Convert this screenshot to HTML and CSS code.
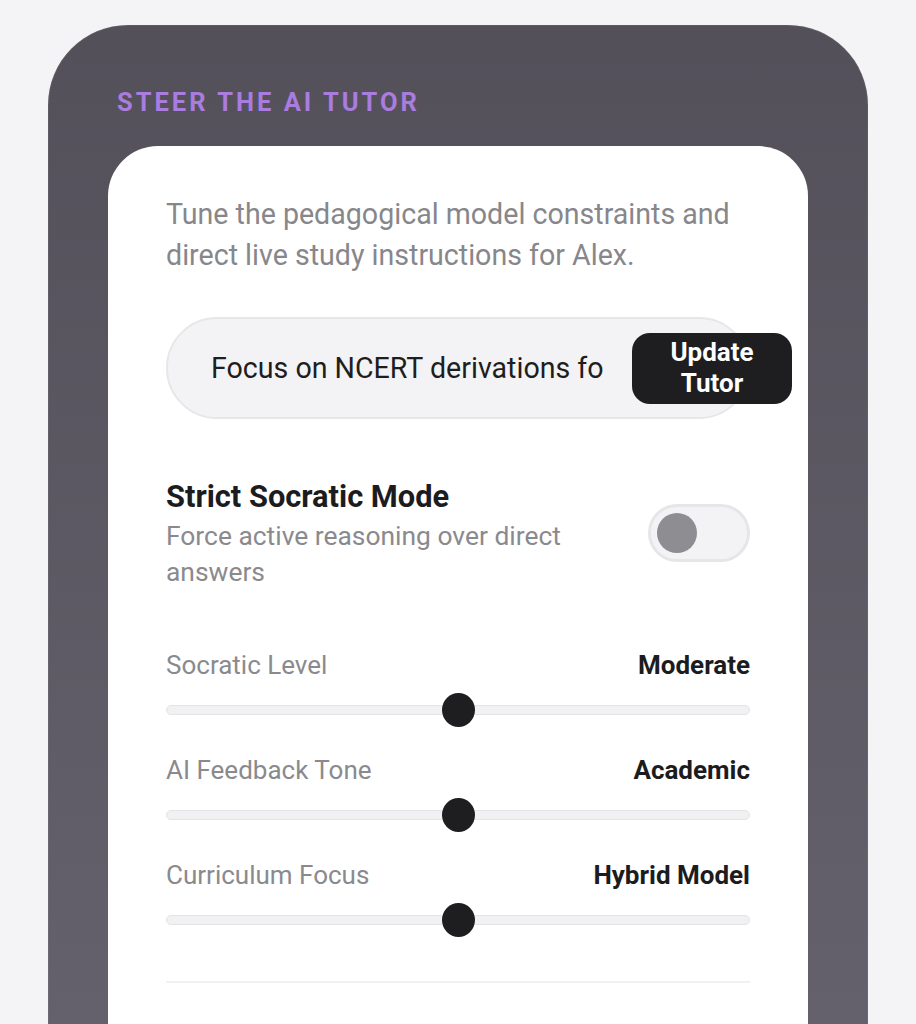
FILE: index.html
```html
<!DOCTYPE html>
<html lang="en">
<head>
<meta charset="utf-8">
<title>Steer the AI Tutor</title>
<link rel="stylesheet" href="styles.css">
</head>
<body>
<main class="panel">
  <h2 class="panel-title">STEER THE AI TUTOR</h2>
  <section class="card">
    <p class="intro">Tune the pedagogical model constraints and direct live study instructions for Alex.</p>

    <form class="instruct" onsubmit="return false">
      <input class="instruct-input" type="text" value="Focus on NCERT derivations for electrostatics" aria-label="Study instruction">
      <button class="instruct-btn" type="submit">Update<br>Tutor</button>
    </form>

    <div class="toggle-row">
      <div class="toggle-text">
        <h3 class="toggle-title">Strict Socratic Mode</h3>
        <p class="toggle-desc">Force active reasoning over direct answers</p>
      </div>
      <span class="switch" role="switch" aria-checked="false"><span class="switch-knob"></span></span>
    </div>

    <div class="slider">
      <div class="slider-head"><span class="slider-label">Socratic Level</span><span class="slider-value">Moderate</span></div>
      <div class="slider-track"><span class="slider-rail"></span><span class="slider-thumb"></span></div>
    </div>
    <div class="slider">
      <div class="slider-head"><span class="slider-label">AI Feedback Tone</span><span class="slider-value">Academic</span></div>
      <div class="slider-track"><span class="slider-rail"></span><span class="slider-thumb"></span></div>
    </div>
    <div class="slider">
      <div class="slider-head"><span class="slider-label">Curriculum Focus</span><span class="slider-value">Hybrid Model</span></div>
      <div class="slider-track"><span class="slider-rail"></span><span class="slider-thumb"></span></div>
    </div>

    <hr class="divider">
  </section>
</main>
</body>
</html>
```

FILE: styles.css
```css
* { box-sizing: border-box; }

html, body {
  margin: 0;
  padding: 0;
  background: #f4f4f6;
  font-family: Roboto, "Noto Sans", "Liberation Sans", sans-serif;
  overflow: hidden;
}

.panel {
  margin: 25px 0 0 48px;
  width: 820px;
  min-height: 1100px;
  padding: 62px 60px 0;
  border-radius: 80px 80px 0 0;
  background: linear-gradient(180deg, #54505a 0%, #67636e 100%);
  box-shadow: inset 0 0 0 1px rgba(255, 255, 255, 0.06);
}

.panel-title {
  margin: 0 0 29px 9px;
  font-size: 25.5px;
  line-height: 30px;
  font-weight: 700;
  letter-spacing: 3px;
  color: #a97ce0;
}

.card {
  background: #ffffff;
  border-radius: 50px 50px 0 0;
  padding: 48px 58px 120px;
  min-height: 1000px;
}

.intro {
  margin: 0 0 41px;
  font-size: 28.6px;
  line-height: 41px;
  color: #87878b;
}

.instruct {
  display: flex;
  align-items: center;
  height: 102px;
  padding-left: 43px;
  border-radius: 51px;
  background: #f3f3f5;
  border: 2px solid #e7e7ea;
  margin: 0;
}

.instruct-input {
  flex: 0 0 392px;
  width: 392px;
  margin: 0 29px 0 0;
  padding: 0;
  border: none;
  outline: none;
  background: transparent;
  font-family: inherit;
  font-size: 28.6px;
  color: #1e1e20;
}

.instruct-btn {
  flex: 0 0 160px;
  height: 71px;
  border: none;
  border-radius: 18px;
  background: #1e1e20;
  color: #ffffff;
  font-family: inherit;
  font-size: 26px;
  font-weight: 700;
  line-height: 31px;
  padding: 0;
}

.toggle-row {
  display: flex;
  align-items: center;
  justify-content: space-between;
  margin-top: 57px;
}

.toggle-text { width: 430px; }

.toggle-title {
  margin: 0;
  font-size: 30.8px;
  line-height: 42px;
  font-weight: 700;
  color: #1c1c1e;
}

.toggle-desc {
  margin: 0;
  font-size: 26.4px;
  line-height: 36px;
  color: #8a8a8e;
}

.switch {
  display: flex;
  align-items: center;
  width: 102px;
  height: 58px;
  padding: 0 6px;
  border-radius: 29px;
  background: #f3f3f5;
  border: 3px solid #e6e6e9;
}

.switch-knob {
  width: 40px;
  height: 40px;
  border-radius: 50%;
  background: #8e8d92;
}

.slider { margin-top: 59px; }
.slider + .slider { margin-top: 27px; }

.slider-head {
  display: flex;
  justify-content: space-between;
  align-items: baseline;
  height: 32px;
  line-height: 32px;
  font-size: 26px;
}

.slider-label { color: #8a8a8e; }
.slider-value { color: #1c1c1e; font-weight: 700; }

.slider-track {
  position: relative;
  height: 34px;
  margin-top: 12px;
  display: flex;
  align-items: center;
  justify-content: center;
}

.slider-rail {
  display: block;
  width: 100%;
  height: 10px;
  border-radius: 5px;
  background: #f1f1f3;
  border: 1px solid #e4e4e7;
}

.slider-thumb {
  position: absolute;
  left: calc(50% - 16.5px);
  top: 0;
  width: 33px;
  height: 34px;
  border-radius: 50%;
  background: #1e1e20;
}

.divider {
  margin: 44px 0 0;
  border: none;
  height: 2px;
  background: #f1f1f3;
}
```
